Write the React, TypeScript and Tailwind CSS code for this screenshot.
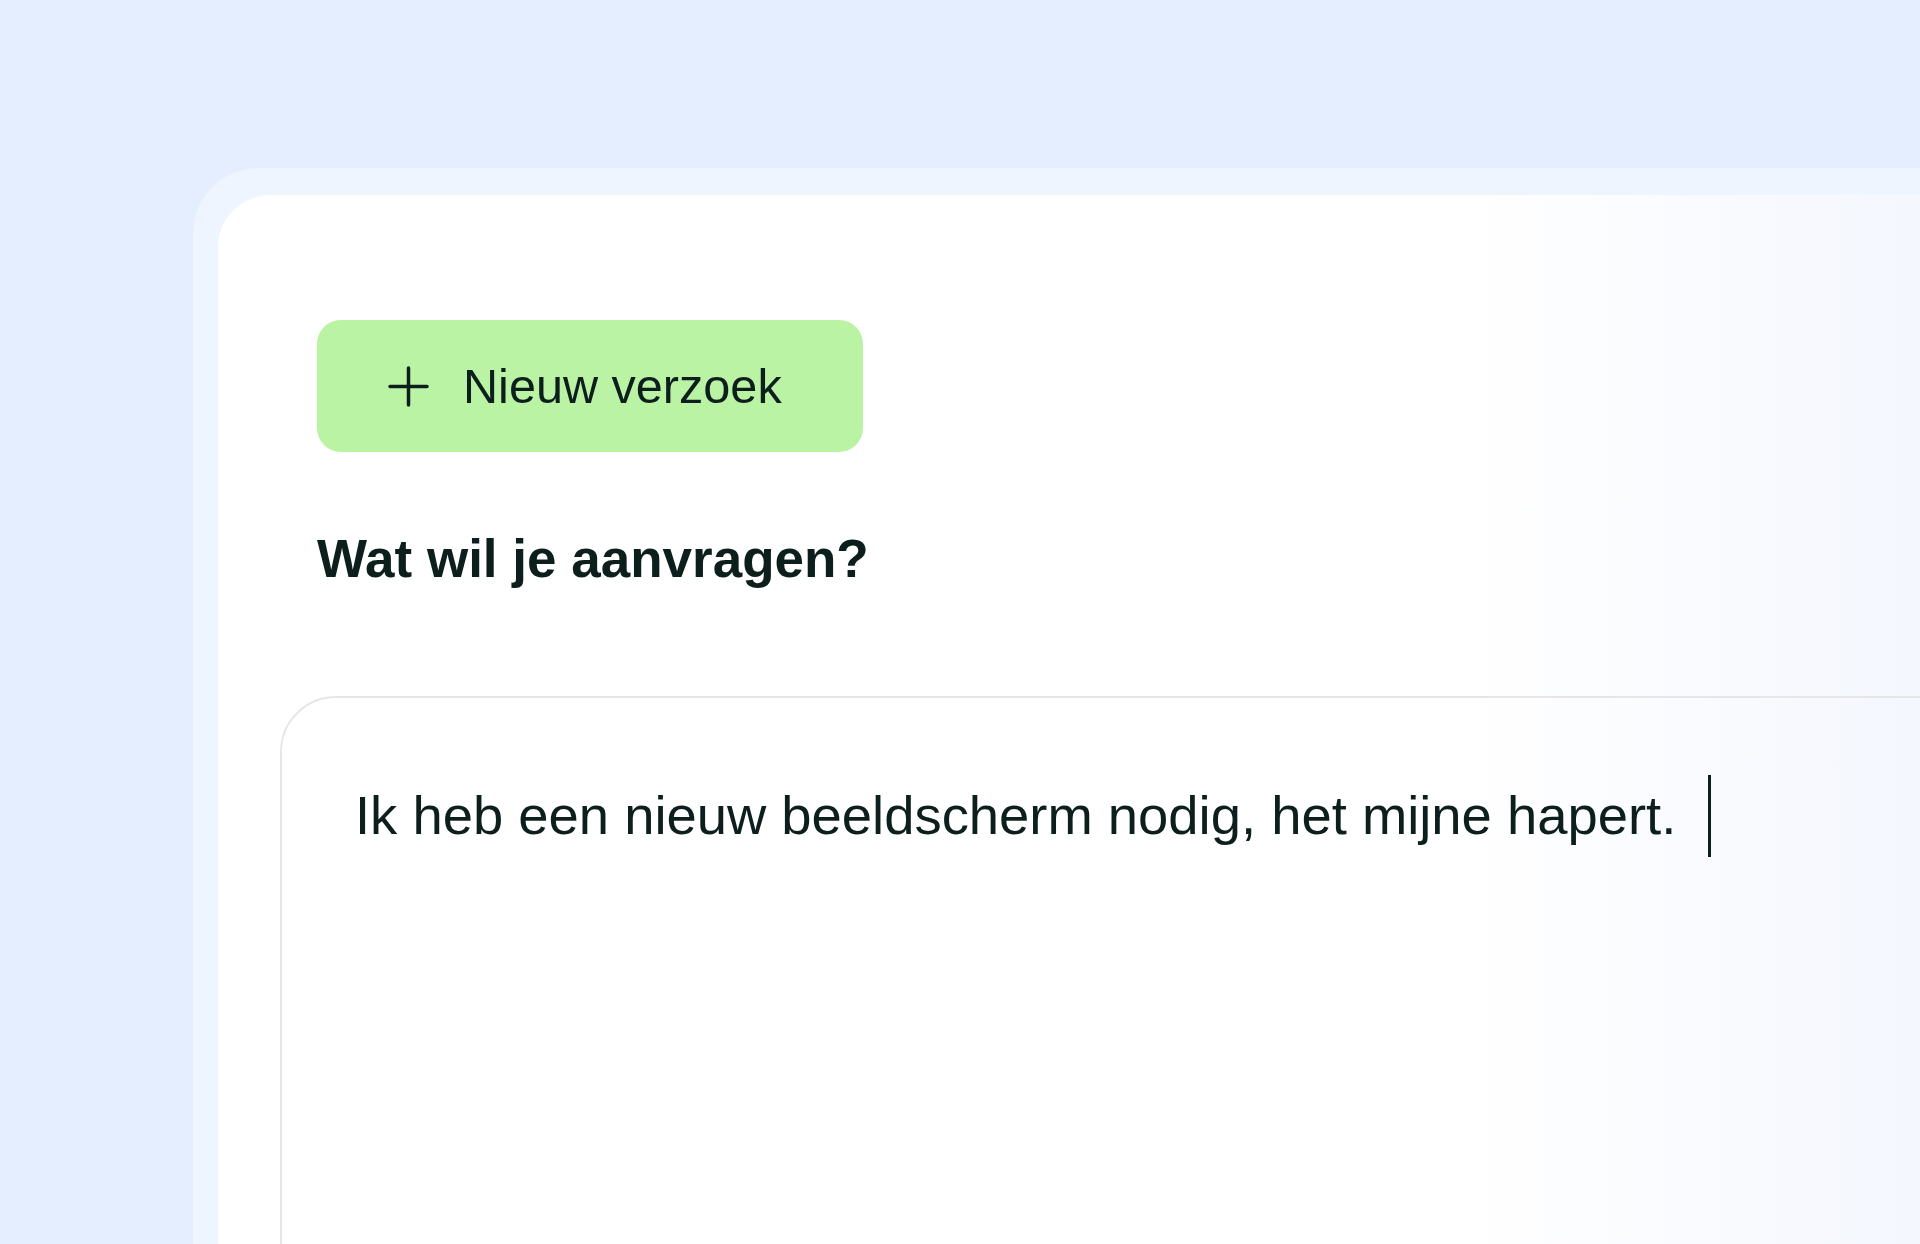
export default function App() {
    return (
        <div className="w-[1920px] h-[1244px] overflow-hidden bg-[#e5eefe] pl-[193px] pt-[168px] font-['Liberation_Sans',Arial,sans-serif] text-[#0d1f1d]">
            {/* outer frame */}
            <div className="w-[1800px] h-[1200px] rounded-[66px] bg-[#eef5fe] pl-[25px] pt-[27px]">
                {/* card */}
                <div className="h-full rounded-[52px] bg-[linear-gradient(90deg,#ffffff_70%,#f4f7fe_96%)] pl-[62px] pt-[125px]">
                    <div className="pl-[37px]">
                        <button className="flex items-center w-[546px] h-[132px] rounded-[24px] bg-[#bbf3a5] pl-[71px] gap-[34px] text-[48.6px] leading-none">
                            <svg width="41" height="41" viewBox="0 0 41 41" fill="none" stroke="currentColor" strokeWidth="3.5" strokeLinecap="round">
                                <path d="M20.5 2v37M2 20.5h37" />
                            </svg>
                            <span>Nieuw verzoek</span>
                        </button>
                        <h2 className="mt-[80px] text-[53px] font-bold leading-none">Wat wil je aanvragen?</h2>
                    </div>

                    {/* request input */}
                    <div className="mt-[111px] h-[700px] rounded-[56px] border-2 border-[#e6e6e6] pl-[73px] pt-[77px]">
                        <div className="flex items-center">
                            <span className="text-[54.4px] leading-none">
                                Ik heb een nieuw beeldscherm nodig, het mijne hapert.
                            </span>
                            <span className="ml-[32px] w-[3px] h-[82px] bg-[#0d1f1d]"></span>
                        </div>
                    </div>
                </div>
            </div>
        </div>
    );
}
